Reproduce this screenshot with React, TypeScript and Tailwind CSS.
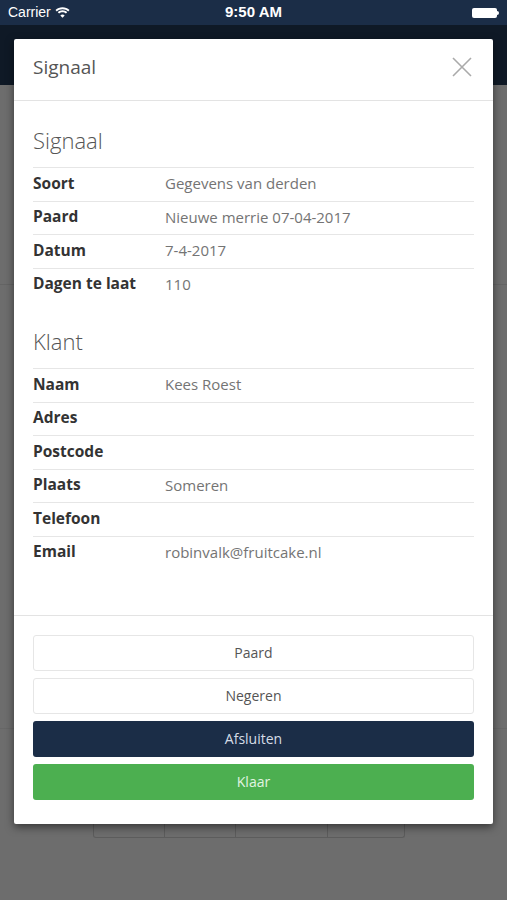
import React from "react";

type Row = { label: string; value?: string };

const signaal: Row[] = [
  { label: "Soort", value: "Gegevens van derden" },
  { label: "Paard", value: "Nieuwe merrie 07-04-2017" },
  { label: "Datum", value: "7-4-2017" },
  { label: "Dagen te laat", value: "110" },
];

const klant: Row[] = [
  { label: "Naam", value: "Kees Roest" },
  { label: "Adres" },
  { label: "Postcode" },
  { label: "Plaats", value: "Someren" },
  { label: "Telefoon" },
  { label: "Email", value: "robinvalk@fruitcake.nl" },
];

const InfoTable: React.FC<{ rows: Row[] }> = ({ rows }) => (
  <div className="flex flex-col">
    {rows.map((r) => (
      <div
        key={r.label}
        className="flex items-center h-[33.5px] pb-[2px] border-t border-[#e6e6e6] text-[15px]"
      >
        <span className="w-[132px] shrink-0 text-[15.5px] font-bold text-[#333]">
          {r.label}
        </span>
        <span className="text-[#747474]">{r.value}</span>
      </div>
    ))}
  </div>
);

const StatusBar = () => (
  <div className="relative flex items-center h-[25px] bg-[#1b2d47] px-2 text-white font-['Liberation_Sans',sans-serif]">
    <div className="flex items-center gap-1 text-[14px]">
      <span>Carrier</span>
      <svg width="15" height="11" viewBox="0 0 15 11" fill="white">
        <path d="M7.5 2.2c2.2 0 4.2.8 5.7 2.2l1.3-1.4C12.6 1.2 10.2.2 7.5.2S2.4 1.2.5 3l1.3 1.4C3.3 3 5.3 2.2 7.5 2.2z" />
        <path d="M7.5 5.3c1.3 0 2.5.5 3.4 1.3l1.3-1.4C11 4 9.3 3.3 7.5 3.3S4 4 2.8 5.2l1.3 1.4c.9-.8 2.1-1.3 3.4-1.3z" />
        <path d="M7.5 10.8l2.2-2.4c-.6-.5-1.4-.9-2.2-.9s-1.6.3-2.2.9z" />
      </svg>
    </div>
    <span className="absolute left-0 right-0 text-center text-[15px] font-bold pointer-events-none">
      9:50 AM
    </span>
    <div className="ml-auto flex items-center">
      <div className="w-[25px] h-[10px] bg-white rounded-[2px]" />
      <div className="w-[2px] h-[4px] bg-white rounded-r-sm" />
    </div>
  </div>
);

const App: React.FC = () => {
  return (
    <div className="relative w-[507px] h-[900px] overflow-hidden bg-[#6d6d6d] font-['Open_Sans',sans-serif]">
      <StatusBar />
      <div className="h-[60px] bg-[#0f1926]" />
      <div className="h-[200px] border-b border-[#646464]" />
      <div className="h-[444px] border-b border-[#676767]" />
      {/* pagination peeking out below the dialog */}
      <div className="mt-[92px] ml-[93px] flex h-[17px] w-[312px] border border-t-0 border-[#5c5c5c] rounded-b-[3px]">
        <div className="w-[71px] border-r border-[#5c5c5c]" />
        <div className="w-[71px] border-r border-[#5c5c5c]" />
        <div className="w-[92px] border-r border-[#5c5c5c]" />
        <div className="flex-1" />
      </div>

      <div className="absolute top-[39px] left-[14px] w-[479px] bg-white shadow-[0_3px_8px_rgba(0,0,0,0.5)] rounded-[2px]">
        <div className="flex items-center justify-between h-[62px] px-[19px] pb-[5px] border-b border-[#e3e3e3]">
          <span className="text-[19px] text-[#555]">Signaal</span>
          <svg width="20" height="20" viewBox="0 0 20 20" className="mr-[2px]">
            <path
              d="M1 1L19 19M19 1L1 19"
              stroke="#aaa"
              strokeWidth="1.6"
            />
          </svg>
        </div>

        <div className="px-[19px] pt-[23px] pb-[46px]">
          <h2 className="text-[22px] font-light leading-[32px] text-[#555] mb-[11px]">
            Signaal
          </h2>
          <InfoTable rows={signaal} />
          <h2 className="text-[22px] font-light leading-[32px] text-[#555] mt-[24px] mb-[11px]">
            Klant
          </h2>
          <InfoTable rows={klant} />
        </div>

        <div className="flex flex-col gap-[7px] px-[19px] pt-[19px] pb-[24px] border-t border-[#e3e3e3] text-[14px]">
          <button className="h-[36px] pb-[2px] rounded-[3px] border border-[#e6e6e6] bg-white text-[#555]">
            Paard
          </button>
          <button className="h-[36px] pb-[2px] rounded-[3px] border border-[#e6e6e6] bg-white text-[#555]">
            Negeren
          </button>
          <button className="h-[36px] pb-[2px] rounded-[3px] bg-[#1b2d47] text-[#d5dce6]">
            Afsluiten
          </button>
          <button className="h-[36px] pb-[2px] rounded-[3px] bg-[#4caf50] text-[#e2f4e2]">
            Klaar
          </button>
        </div>
      </div>
    </div>
  );
};

export default App;
